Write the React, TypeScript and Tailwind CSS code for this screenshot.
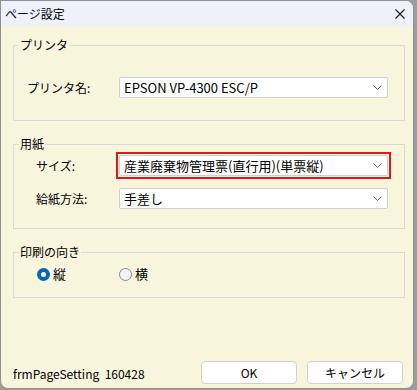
/* ページ設定 dialog — printer / paper / orientation */

const jp = "font-['Noto_Sans_CJK_JP','Noto_Sans',sans-serif]";

function Chevron() {
  return (
    <svg width="9" height="5" viewBox="0 0 9 5" fill="none">
      <path d="M0.5 0.5 L4.5 4.5 L8.5 0.5" stroke="#6a6a6a" strokeWidth="1" />
    </svg>
  );
}

function Combo({ value }: { value: string }) {
  return (
    <div className="flex h-[21px] w-[269px] items-center justify-between rounded-[2px] border border-[#cfcfcf] bg-white pl-[4px] pr-[5px] text-[13px] leading-none text-black">
      <span>{value}</span>
      <Chevron />
    </div>
  );
}

function Radio({ checked, label }: { checked?: boolean; label: string }) {
  return (
    <div className="flex items-center gap-[3px]">
      {checked ? (
        <span className="flex h-[13px] w-[13px] items-center justify-center rounded-full bg-[#0067c0]">
          <span className="h-[5px] w-[5px] rounded-full bg-white" />
        </span>
      ) : (
        <span className="h-[13px] w-[13px] rounded-full border border-[#8a8a8a] bg-[#f3f3f3]" />
      )}
      <span className="text-[13px] leading-[16px]">{label}</span>
    </div>
  );
}

export default function App() {
  return (
    <div className={`h-[390px] w-[417px] overflow-hidden bg-[#9c9c9c] ${jp}`}>
      <div className="flex h-[389px] w-[414px] flex-col overflow-hidden rounded-tr-[8px] rounded-b-[8px] border border-[#8f8f8f] bg-[#f7f5dc] text-black">
        {/* title bar */}
        <div className="flex h-[25px] items-center justify-between bg-[#eef1f9] pl-[4px] pr-[8px]">
          <span className="text-[12px] leading-none">ページ設定</span>
          <svg width="10" height="10" viewBox="0 0 10 10">
            <path d="M0.5 0.5 L9.5 9.5 M9.5 0.5 L0.5 9.5" stroke="#1a1a1a" strokeWidth="1.1" />
          </svg>
        </div>

        {/* プリンタ */}
        <fieldset className="ml-[12px] mt-[11px] w-[392px] border border-[#d9d9d3] pb-[22px]">
          <legend className="ml-[5px] px-[1px] text-[12px] leading-[16px]">プリンタ</legend>
          <div className="mt-[24px] flex items-center pl-[13px]">
            <span className="w-[92px] text-[12px] leading-[16px]">プリンタ名:</span>
            <Combo value="EPSON VP-4300 ESC/P" />
          </div>
        </fieldset>

        {/* 用紙 */}
        <fieldset className="ml-[12px] mt-[15px] w-[392px] border border-[#d9d9d3] pb-[19px]">
          <legend className="ml-[5px] px-[1px] text-[12px] leading-[16px]">用紙</legend>
          <div className="flex items-center pl-[22px]">
            <span className="w-[80px] text-[12px] leading-[16px]">サイズ:</span>
            <div className="border-2 border-[#e8141b] p-[1px]">
              <Combo value="産業廃棄物管理票(直行用)(単票縦)" />
            </div>
          </div>
          <div className="mt-[9px] flex items-center pl-[22px]">
            <span className="w-[83px] text-[12px] leading-[16px]">給紙方法:</span>
            <Combo value="手差し" />
          </div>
        </fieldset>

        {/* 印刷の向き */}
        <fieldset className="ml-[12px] mt-[15px] w-[392px] border border-[#d9d9d3] pb-[15px] pt-[6px]">
          <legend className="ml-[5px] px-[1px] text-[12px] leading-[16px]">印刷の向き</legend>
          <div className="flex items-center gap-[53px] pl-[23px]">
            <Radio checked label="縦" />
            <Radio label="横" />
          </div>
        </fieldset>

        {/* footer */}
        <div className="mt-auto flex items-end justify-between pb-[4px] pl-[12px] pr-[10px]">
          <span className="pb-[2px] text-[12px] leading-[16px]">frmPageSetting&nbsp;&nbsp;160428</span>
          <div className="flex gap-[10px]">
            <button className="h-[23px] w-[96px] rounded-[4px] border border-[#d0d0d0] bg-white text-[12px] leading-none">
              OK
            </button>
            <button className="h-[23px] w-[96px] rounded-[4px] border border-[#d0d0d0] bg-white text-[12px] leading-none">
              キャンセル
            </button>
          </div>
        </div>
      </div>
    </div>
  );
}
